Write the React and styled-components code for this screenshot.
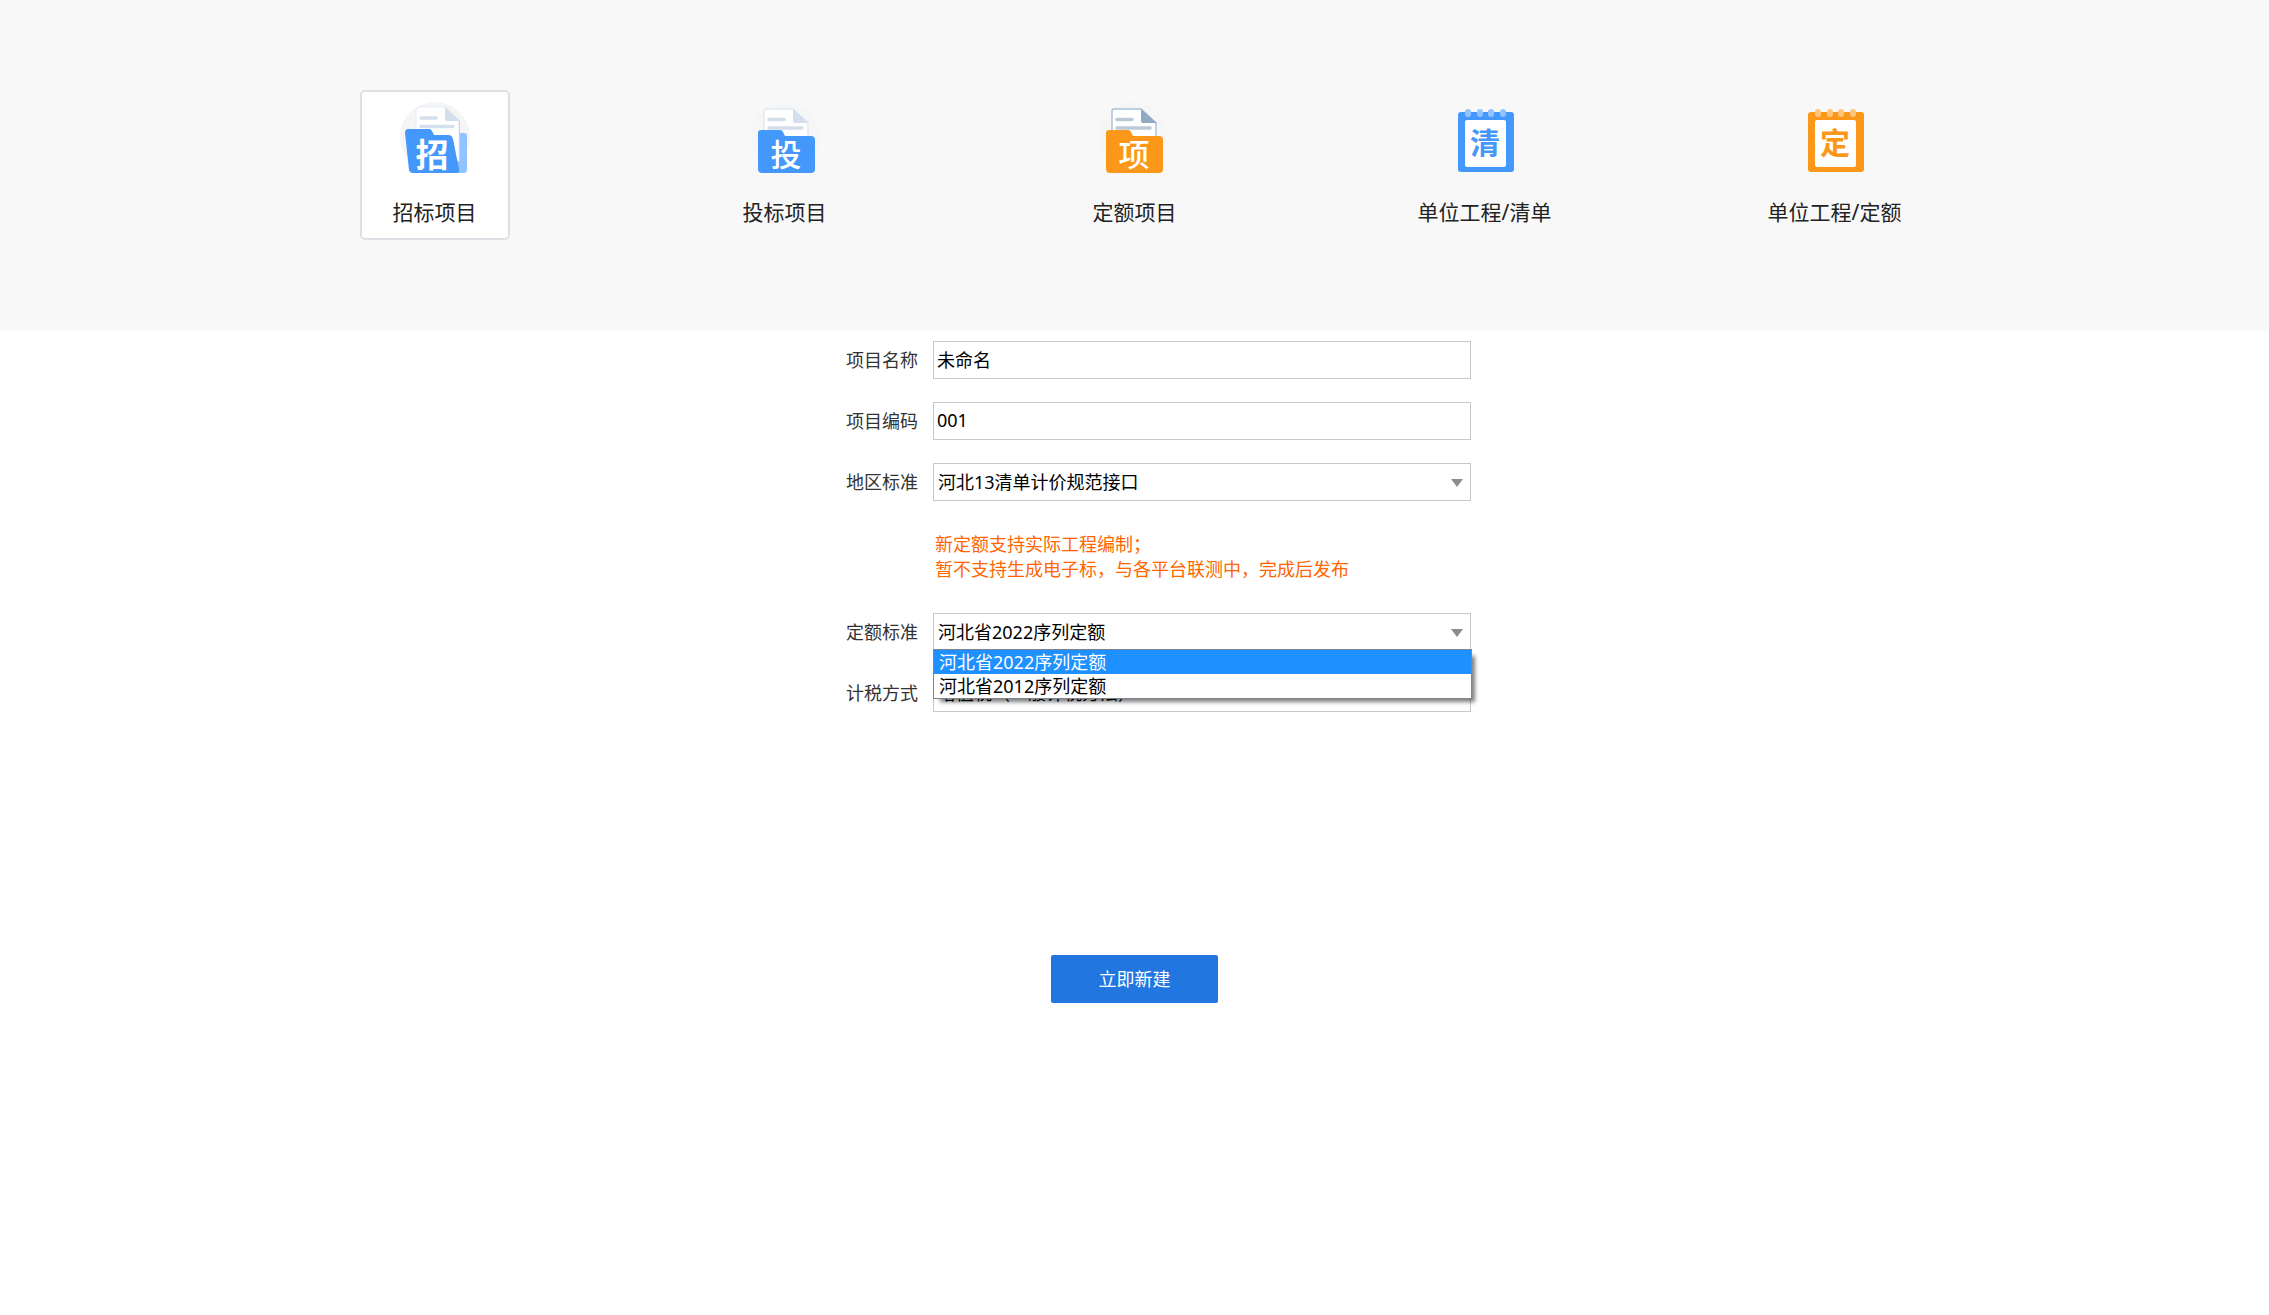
import React, { useState } from "react";
import styled, { createGlobalStyle } from "styled-components";

const fontStack = '"Noto Sans", "Noto Sans CJK SC", sans-serif';

const GlobalStyle = createGlobalStyle`
  *, *::before, *::after { box-sizing: border-box; }
  body { margin: 0; background: #fff; color: #333; font: 18px/25px ${fontStack}; }
  button, input, select { font: inherit; }
`;

const Header = styled.header`
  background: #f8f8f8;
  padding: 90px 24px 91px;
`;

const TypeList = styled.nav`
  display: flex;
  justify-content: space-between;
  max-width: 1550px;
  margin: 0 auto;
`;

const TypeCard = styled.button`
  display: flex;
  flex-direction: column;
  align-items: center;
  gap: 17px;
  width: 150px;
  height: 150px;
  padding: 9px 0 0;
  border: 2px solid ${(p) => (p.$active ? "#dde1e5" : "transparent")};
  border-radius: 5px;
  background: ${(p) => (p.$active ? "#fff" : "transparent")};
  color: #222;
  font-size: 21px;
  line-height: 28px;
  white-space: nowrap;
  cursor: pointer;
`;

const IconSvg = styled.svg`
  display: block;
  flex: none;
  width: 72px;
  height: 80px;
`;

const Glyph = styled.text`
  font-family: "Noto Sans CJK SC", sans-serif;
  font-weight: ${(p) => (p.$bold ? 700 : 500)};
  text-anchor: middle;
`;

const Form = styled.form`
  display: flex;
  flex-direction: column;
  gap: 23px;
  max-width: 673px;
  margin: 0 auto;
  padding-top: 10px;
`;

const Row = styled.div`
  display: grid;
  grid-template-columns: 120px 1fr;
  column-gap: 15px;
  align-items: center;
`;

const Label = styled.label`
  text-align: right;
`;

const Control = styled.div`
  position: relative;
`;

const TextInput = styled.input`
  display: block;
  width: 100%;
  height: 38px;
  padding: 0 3px 2px;
  border: 1px solid #c8c8c8;
  border-radius: 0;
  outline: none;
  background: #fff;
  color: #000;
`;

const Select = styled.select`
  appearance: none;
  display: block;
  width: 100%;
  height: 38px;
  padding: 0 28px 0 4px;
  border: 1px solid #c8c8c8;
  border-radius: 0;
  outline: none;
  background: #fff;
  color: #000;
`;

const Arrow = styled.span`
  position: absolute;
  top: 16px;
  right: 8px;
  border: 6px solid transparent;
  border-top: 8px solid #8c8c8c;
  border-bottom: 0;
  pointer-events: none;
`;

const Options = styled.ul`
  position: absolute;
  z-index: 1;
  top: 100%;
  left: 0;
  right: -1px;
  margin: -2px 0 0;
  padding: 0;
  border: 1px solid #7f848c;
  background: #fff;
  box-shadow: 5px 5px 4px -2px rgba(0, 0, 0, 0.5);
  list-style: none;
`;

const Option = styled.li`
  height: 24px;
  padding: 0 5px;
  line-height: 24px;
  background: ${(p) => (p.$active ? "#1e90ff" : "#fff")};
  color: ${(p) => (p.$active ? "#fff" : "#000")};
  cursor: default;
`;

const Notice = styled.p`
  grid-column: 2;
  margin: 8px 0;
  padding-left: 2px;
  color: #ff6600;
`;

const Submit = styled.button`
  display: block;
  width: 167px;
  height: 48px;
  margin: 220px auto 24px;
  border: 0;
  border-radius: 2px;
  background: #2177df;
  color: #fff;
  cursor: pointer;
`;

function FolderIcon({ char, color, line, edge, fold, viewBox = "0 0 72 80" }) {
  return (
    <IconSvg viewBox={viewBox} aria-hidden="true">
      <circle cx="36" cy="36" r="35" fill="#f6f6f7" />
      <path d="M17 8H44L59 22V40H15V10Q15 8 17 8Z" fill="#fff" stroke={edge} strokeWidth="1.4" />
      <path d="M44 8L60 22H46Q44 22 44 20Z" fill={fold} />
      <path d="M20 18.5H35M20 27H53" stroke={line} strokeWidth="3.6" strokeLinecap="round" />
      <path d="M12 29H31Q33 29 34 31L36 35H62Q66 35 66 39V68Q66 72 62 72H13Q9 72 9 68V32Q9 29 12 29Z" fill={color} />
      <Glyph x="37" y="65" fontSize="31" fill="#fff">{char}</Glyph>
    </IconSvg>
  );
}

function OpenFolderIcon({ char }) {
  return (
    <IconSvg viewBox="0 0 72 80" aria-hidden="true">
      <circle cx="36" cy="36" r="35" fill="#f5f5f6" />
      <path d="M56 32H65Q68 32 68 35V69Q68 72 65 72H54Z" fill="#91c4ff" />
      <path d="M58 20H61V62L58 60Z" fill="#9cbde9" />
      <path d="M20 6H46L60 19V60H17V9Q17 6 20 6Z" fill="#fff" stroke="#e5edf7" />
      <path d="M46 6L61 20H48Q46 20 46 18Z" fill="#d3dfed" />
      <path d="M22 17H37M22 25.5H54" stroke="#d5e0ee" strokeWidth="3.6" strokeLinecap="round" />
      <path d="M9 28H30Q32 28 33 30L35 34H49Q53 34 54 38L60 68Q61 72 58 72H14Q11 72 10 69L6 32Q6 28 9 28Z" fill="#4497fb" />
      <Glyph $bold x="33" y="66" fontSize="33" fill="#fff">{char}</Glyph>
    </IconSvg>
  );
}

function NotepadIcon({ char, color, ring }) {
  return (
    <IconSvg viewBox="0 0 72 80" aria-hidden="true">
      <rect x="9" y="11" width="56" height="60" rx="3" fill={color} />
      <rect x="16" y="19" width="41" height="47" rx="2" fill="#fff" />
      {[19, 31, 42, 54].map((x) => (
        <rect key={x} x={x - 3} y="8" width="6" height="8" rx="3" fill={ring} />
      ))}
      <Glyph $bold x="36" y="53" fontSize="30" fill={color}>{char}</Glyph>
    </IconSvg>
  );
}

const blueFolder = { color: "#4497fb", line: "#d3deeb", edge: "#dfe9f4", fold: "#d3dfec" };
const orangeFolder = { color: "#fb9719", line: "#bcc9d8", edge: "#a8c0dc", fold: "#91a9c3", viewBox: "2 0 72 80" };

const projectTypes = [
  { name: "招标项目", icon: <OpenFolderIcon char="招" /> },
  { name: "投标项目", icon: <FolderIcon char="投" {...blueFolder} /> },
  { name: "定额项目", icon: <FolderIcon char="项" {...orangeFolder} /> },
  { name: "单位工程/清单", icon: <NotepadIcon char="清" color="#4497fb" ring="#91c4ff" /> },
  { name: "单位工程/定额", icon: <NotepadIcon char="定" color="#fb9719" ring="#ffc57d" /> },
];

const quotas = ["河北省2022序列定额", "河北省2012序列定额"];

export default function App() {
  const [type, setType] = useState(0);
  const [quota, setQuota] = useState(quotas[0]);

  return (
    <>
      <GlobalStyle />
      <Header>
        <TypeList aria-label="项目类型">
          {projectTypes.map((item, i) => (
            <TypeCard key={item.name} type="button" $active={i === type} aria-pressed={i === type} onClick={() => setType(i)}>
              {item.icon}
              <span>{item.name}</span>
            </TypeCard>
          ))}
        </TypeList>
      </Header>
      <main>
        <Form onSubmit={(e) => e.preventDefault()}>
          <Row>
            <Label htmlFor="name">项目名称</Label>
            <TextInput id="name" defaultValue="未命名" />
          </Row>
          <Row>
            <Label htmlFor="code">项目编码</Label>
            <TextInput id="code" defaultValue="001" />
          </Row>
          <Row>
            <Label htmlFor="region">地区标准</Label>
            <Control>
              <Select id="region">
                <option>河北13清单计价规范接口</option>
              </Select>
              <Arrow />
            </Control>
          </Row>
          <Row>
            <Notice>
              新定额支持实际工程编制；
              <br />
              暂不支持生成电子标，与各平台联测中，完成后发布
            </Notice>
          </Row>
          <Row>
            <Label htmlFor="quota">定额标准</Label>
            <Control>
              <Select id="quota" value={quota} onChange={(e) => setQuota(e.target.value)}>
                {quotas.map((q) => (
                  <option key={q}>{q}</option>
                ))}
              </Select>
              <Arrow />
              <Options role="listbox" aria-label="定额标准">
                {quotas.map((q) => (
                  <Option key={q} role="option" aria-selected={q === quota} $active={q === quota} onClick={() => setQuota(q)}>
                    {q}
                  </Option>
                ))}
              </Options>
            </Control>
          </Row>
          <Row>
            <Label htmlFor="tax">计税方式</Label>
            <Control>
              <Select id="tax">
                <option>增值税（一般计税方法）</option>
              </Select>
            </Control>
          </Row>
          <Submit type="submit">立即新建</Submit>
        </Form>
      </main>
    </>
  );
}
